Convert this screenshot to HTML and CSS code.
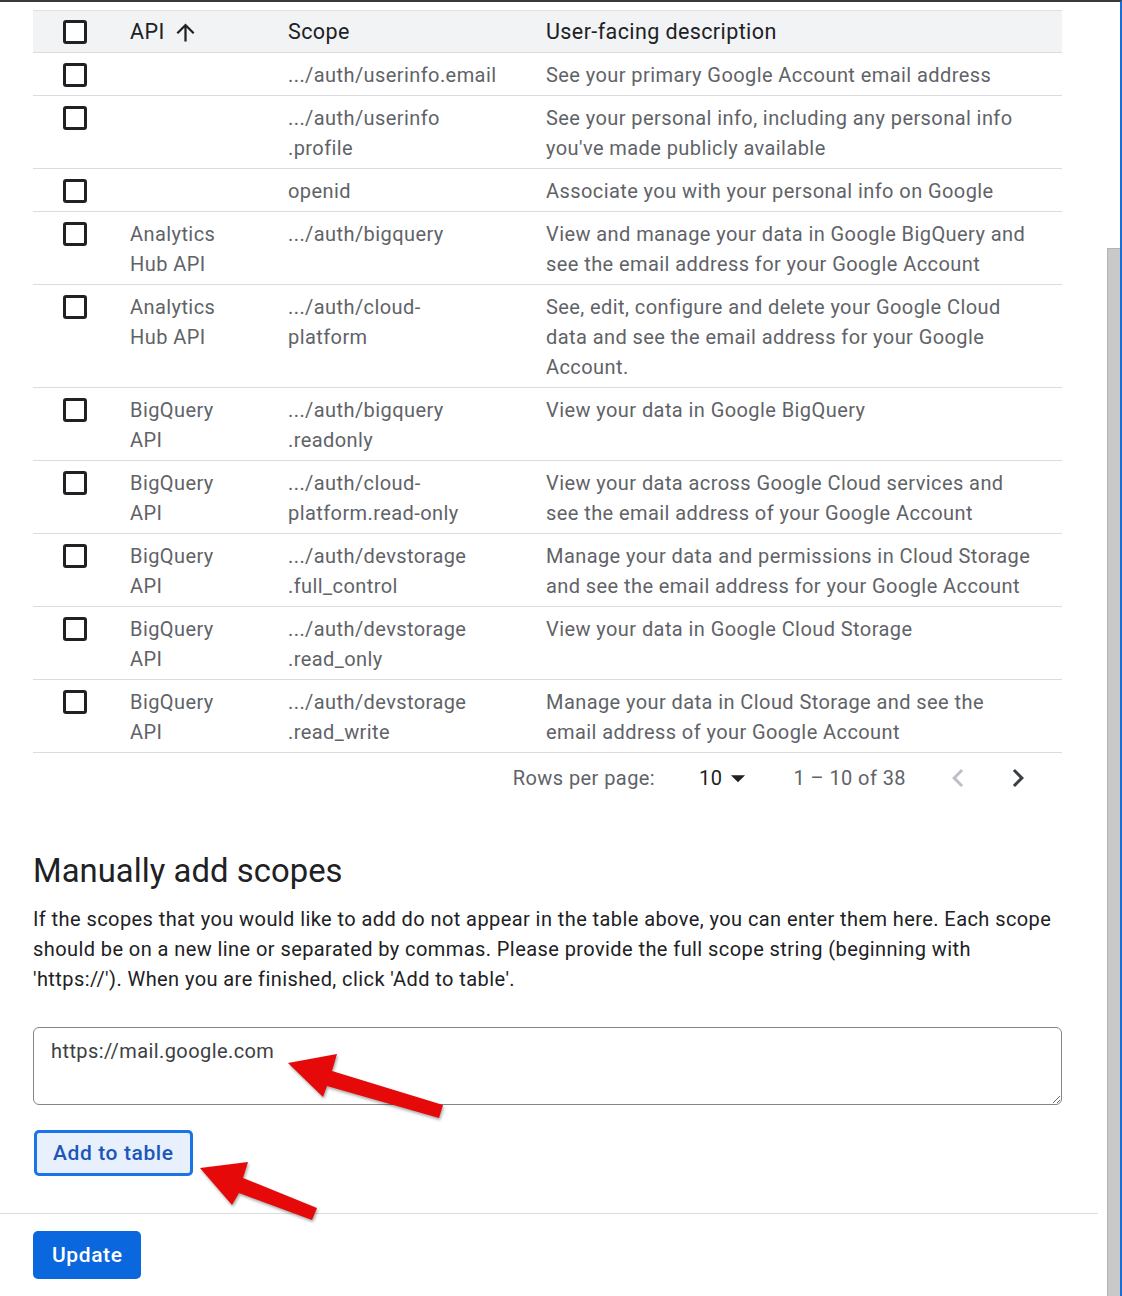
FILE: index.html
```html
<!DOCTYPE html>
<html lang="en">
<head>
<meta charset="utf-8">
<title>Scopes</title>
<link rel="stylesheet" href="styles.css">
</head>
<body>
<div class="frame">
  <main class="main">
    <table class="scopes">
      <colgroup>
        <col class="c-check"><col class="c-api"><col class="c-scope"><col class="c-desc">
      </colgroup>
      <thead>
        <tr>
          <th class="cell-check"><span class="checkbox"></span></th>
          <th><span class="sort">API<svg class="sort-icon" viewBox="0 0 24 24"><path d="M4 12l1.41 1.41L11 7.83V20h2V7.83l5.58 5.59L20 12l-8-8-8 8z"/></svg></span></th>
          <th>Scope</th>
          <th>User-facing description</th>
        </tr>
      </thead>
      <tbody>
        <tr>
          <td class="cell-check"><span class="checkbox"></span></td>
          <td></td>
          <td>.../auth/userinfo.email</td>
          <td>See your primary Google Account email address</td>
        </tr>
        <tr>
          <td class="cell-check"><span class="checkbox"></span></td>
          <td></td>
          <td>.../auth/userinfo<br>.profile</td>
          <td>See your personal info, including any personal info<br>you've made publicly available</td>
        </tr>
        <tr>
          <td class="cell-check"><span class="checkbox"></span></td>
          <td></td>
          <td>openid</td>
          <td>Associate you with your personal info on Google</td>
        </tr>
        <tr>
          <td class="cell-check"><span class="checkbox"></span></td>
          <td>Analytics<br>Hub API</td>
          <td>.../auth/bigquery</td>
          <td>View and manage your data in Google BigQuery and<br>see the email address for your Google Account</td>
        </tr>
        <tr>
          <td class="cell-check"><span class="checkbox"></span></td>
          <td>Analytics<br>Hub API</td>
          <td>.../auth/cloud-<br>platform</td>
          <td>See, edit, configure and delete your Google Cloud<br>data and see the email address for your Google<br>Account.</td>
        </tr>
        <tr>
          <td class="cell-check"><span class="checkbox"></span></td>
          <td>BigQuery<br>API</td>
          <td>.../auth/bigquery<br>.readonly</td>
          <td>View your data in Google BigQuery</td>
        </tr>
        <tr>
          <td class="cell-check"><span class="checkbox"></span></td>
          <td>BigQuery<br>API</td>
          <td>.../auth/cloud-<br>platform.read-only</td>
          <td>View your data across Google Cloud services and<br>see the email address of your Google Account</td>
        </tr>
        <tr>
          <td class="cell-check"><span class="checkbox"></span></td>
          <td>BigQuery<br>API</td>
          <td>.../auth/devstorage<br>.full_control</td>
          <td>Manage your data and permissions in Cloud Storage<br>and see the email address for your Google Account</td>
        </tr>
        <tr>
          <td class="cell-check"><span class="checkbox"></span></td>
          <td>BigQuery<br>API</td>
          <td>.../auth/devstorage<br>.read_only</td>
          <td>View your data in Google Cloud Storage</td>
        </tr>
        <tr>
          <td class="cell-check"><span class="checkbox"></span></td>
          <td>BigQuery<br>API</td>
          <td>.../auth/devstorage<br>.read_write</td>
          <td>Manage your data in Cloud Storage and see the<br>email address of your Google Account</td>
        </tr>
      </tbody>
    </table>

    <div class="pager">
      <span class="pager-label">Rows per page:</span>
      <span class="pager-select">10<svg class="drop-icon" viewBox="0 0 24 24"><path d="M7 10l5 5 5-5z"/></svg></span>
      <span class="pager-range">1 – 10 of 38</span>
      <svg class="nav-icon nav-prev" viewBox="0 0 24 24"><path d="M15.41 7.41L14 6l-6 6 6 6 1.41-1.41L10.83 12z"/></svg>
      <svg class="nav-icon nav-next" viewBox="0 0 24 24"><path d="M10 6L8.59 7.41 13.17 12l-4.58 4.59L10 18l6-6z"/></svg>
    </div>

    <section class="manual">
      <h2 class="manual-title">Manually add scopes</h2>
      <p class="manual-text">If the scopes that you would like to add do not appear in the table above, you can enter them here. Each scope should be on a new line or separated by commas. Please provide the full scope string (beginning with 'https://'). When you are finished, click 'Add to table'.</p>
      <textarea class="scope-input">https://mail.google.com</textarea>
      <button class="btn-add" type="button">Add to table</button>
    </section>

    <div class="footer">
      <button class="btn-update" type="button">Update</button>
    </div>
  </main>
  <div class="gutter"><div class="thumb"></div></div>
</div>
<svg class="annot" viewBox="0 0 1122 1296" width="1122" height="1296">
  <polygon points="288,1063 337,1054 332,1071 443,1105 439,1118 327,1086 323,1097"/>
  <polygon points="200,1168 248,1162 243,1178 317,1208 312,1220 239,1193 232,1205"/>
</svg>
</body>
</html>
```

FILE: styles.css
```css
* { box-sizing: border-box; }

html, body {
  margin: 0;
  padding: 0;
  background: #ffffff;
}

body {
  position: relative;
  width: 1122px;
  height: 1296px;
  overflow: hidden;
  font-family: Roboto, "Liberation Sans", Arial, sans-serif;
  color: #202124;
}

.frame {
  display: flex;
  height: 1296px;
  border-top: 2px solid #3a3a3a;
  border-right: 2px solid #1a6fd6;
  overflow: hidden;
}

.main {
  width: 1098px;
  flex: none;
  letter-spacing: 0.42px;
}

/* ---------- table ---------- */
.scopes {
  margin: 8px 0 0 33px;
  width: 1029px;
  table-layout: fixed;
  border-collapse: separate;
  border-spacing: 0;
  font-size: 20px;
  line-height: 30px;
}

.c-check { width: 97px; }
.c-api { width: 158px; }
.c-scope { width: 258px; }
.c-desc { width: 516px; }

.scopes th {
  background: #f1f3f4;
  border-top: 1px solid #e0e0e0;
  border-bottom: 1px solid #dadce0;
  padding: 6px 0 5px 0;
  text-align: left;
  font-size: 21.5px;
  font-weight: 400;
  letter-spacing: 0.4px;
  color: #202124;
  vertical-align: top;
  white-space: nowrap;
}

.scopes td {
  border-bottom: 1px solid #dadce0;
  padding: 7px 0 5px 0;
  vertical-align: top;
  color: #5f6368;
  white-space: nowrap;
}

.scopes .cell-check {
  padding-left: 30px;
}

.checkbox {
  display: block;
  width: 24px;
  height: 24px;
  margin-top: 3px;
  border: 3px solid #202124;
  border-radius: 3px;
  background: #fff;
}

.sort {
  display: inline-flex;
  align-items: center;
}

.sort-icon {
  width: 27px;
  height: 27px;
  margin-left: 7px;
  fill: #202124;
}

/* ---------- pager ---------- */
.pager {
  margin-left: 33px;
  width: 1029px;
  height: 50px;
  display: flex;
  align-items: center;
  justify-content: flex-end;
  padding-right: 26px;
  font-size: 20px;
  color: #5f6368;
}

.pager-label { margin-right: 44px; }

.pager-select {
  display: inline-flex;
  align-items: center;
  color: #202124;
  margin-right: 38px;
}

.drop-icon {
  width: 34px;
  height: 34px;
  margin-left: -1px;
  fill: #202124;
}

.pager-range { margin-right: 34px; }

.nav-icon {
  width: 36px;
  height: 36px;
}

.nav-prev {
  fill: #bdc1c6;
  margin-right: 24px;
}

.nav-next { fill: #3c4043; }

/* ---------- manual scopes ---------- */
.manual {
  margin-left: 33px;
  width: 1029px;
}

.manual-title {
  margin: 48px 0 0 0;
  font-size: 32.8px;
  line-height: 40px;
  font-weight: 400;
  letter-spacing: 0.05px;
  color: #202124;
}

.manual-text {
  margin: 13px 0 0 0;
  font-size: 20px;
  line-height: 30px;
  color: #202124;
}

.scope-input {
  display: block;
  margin-top: 33px;
  width: 1029px;
  height: 78px;
  padding: 8px 17px;
  border: 1px solid #80868b;
  border-radius: 6px;
  font-family: Roboto, "Liberation Sans", Arial, sans-serif;
  font-size: 20px;
  line-height: 30px;
  letter-spacing: 0.42px;
  color: #3c4043;
  resize: vertical;
  outline: none;
}

.btn-add {
  display: block;
  margin: 25px 0 0 1px;
  height: 46px;
  padding: 0 16px;
  border: 3px solid #1a73e8;
  border-radius: 5px;
  background: #e8f0fe;
  color: #1a57b8;
  font-family: Roboto, "Liberation Sans", Arial, sans-serif;
  font-size: 21px;
  font-weight: 500;
  letter-spacing: 0.6px;
}

/* ---------- footer ---------- */
.footer {
  margin-top: 37px;
  border-top: 1px solid #dadce0;
  padding: 17px 0 0 33px;
}

.btn-update {
  display: block;
  height: 48px;
  padding: 0 18px 0 19px;
  border: none;
  border-radius: 5px;
  background: #0b67dd;
  color: #ffffff;
  font-family: Roboto, "Liberation Sans", Arial, sans-serif;
  font-size: 21px;
  font-weight: 500;
  letter-spacing: 0.6px;
}

/* ---------- window scrollbar ---------- */
.gutter {
  flex: 1;
  display: flex;
  justify-content: flex-end;
}

.thumb {
  width: 13px;
  margin-top: 246px;
  background: #c9c9c9;
  border-left: 1px solid #b3b3b3;
  border-top: 1px solid #b3b3b3;
}

/* ---------- annotation arrows ---------- */
.annot {
  position: absolute;
  top: 0;
  left: 0;
  pointer-events: none;
  fill: #e60909;
  filter: drop-shadow(1px 2px 1.5px rgba(0, 0, 0, 0.35));
}
```
